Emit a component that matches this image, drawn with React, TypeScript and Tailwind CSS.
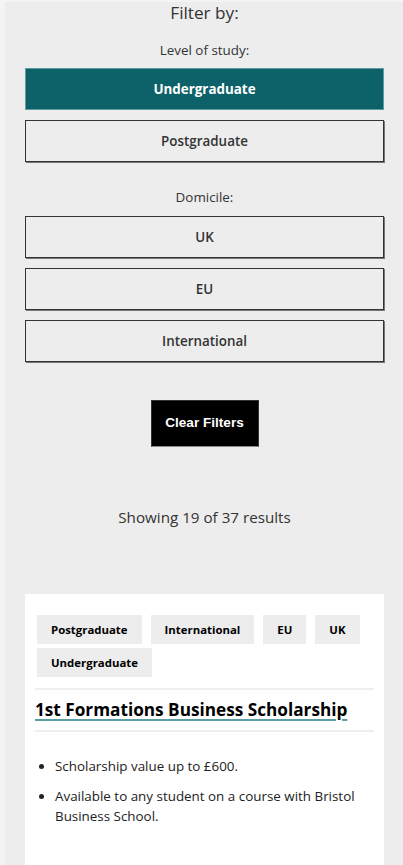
import React from "react";

const levels = ["Undergraduate", "Postgraduate"];
const domiciles = ["UK", "EU", "International"];
const tags = ["Postgraduate", "International", "EU", "UK", "Undergraduate"];

function FilterButton({ label, active }: { label: string; active?: boolean }) {
  return (
    <button
      className={
        active
          ? "h-[42px] w-full border border-[#5f9ca1] bg-[#0d6168] text-[13.4px] font-bold text-white"
          : "h-[42px] w-full border border-[#333] bg-[#ededed] text-[13.4px] font-semibold text-[#333] shadow-[1px_1px_0_#777]"
      }
    >
      {label}
    </button>
  );
}

export default function App() {
  return (
    <div className="min-h-[865px] bg-[#f3f4f4] pl-[5px] pt-[2px] font-['Open_Sans',sans-serif] text-[#333]">
      <div className="bg-[#ededed] pl-5 pr-[19px]">
        <h2 className="pt-[1px] text-center text-[17.2px] leading-[20px]">Filter by:</h2>

        <p className="mt-[17px] text-center text-[13.4px] leading-[20px]">Level of study:</p>
        <div className="mt-[8px] flex flex-col gap-[10px]">
          {levels.map((l, i) => (
            <FilterButton key={l} label={l} active={i === 0} />
          ))}
        </div>

        <p className="mt-[25px] text-center text-[13.4px] leading-[20px]">Domicile:</p>
        <div className="mt-[9px] flex flex-col gap-[10px]">
          {domiciles.map((d) => (
            <FilterButton key={d} label={d} />
          ))}
        </div>

        <div className="mt-[38px] flex justify-center">
          <button className="h-[47px] w-[108px] border border-[#333] border-b-[#888] bg-black font-['Liberation_Sans',sans-serif] text-[13.6px] font-bold text-white">
            Clear Filters
          </button>
        </div>

        <p className="mt-[59px] text-center text-[15.2px] leading-[22px]">Showing 19 of 37 results</p>

        <div className="mt-[66px] bg-white px-[10px] pt-[21px] pb-[44px] text-black">
          <div className="flex flex-wrap gap-x-[9px] gap-y-[4px] pl-[2px]">
            {tags.map((t) => (
              <span
                key={t}
                className="flex h-[29px] items-center bg-[#ededed] px-[14px] text-[11.4px] font-bold"
              >
                {t}
              </span>
            ))}
          </div>
          <div className="mt-[11px] h-[2px] bg-[#eeeeee]" />
          <h3 className="py-[9px] text-[17.2px] font-bold leading-[22px] text-black underline decoration-[#5b9ea4] decoration-[1.5px] underline-offset-[3px]">
            1st Formations Business Scholarship
          </h3>
          <div className="h-[2px] bg-[#eeeeee]" />
          <ul className="mt-[24px] list-disc pl-[20px] text-[13.4px] leading-[20px] text-[#222]">
            <li className="mb-[10px]">Scholarship value up to £600.</li>
            <li>Available to any student on a course with Bristol Business School.</li>
          </ul>
        </div>
      </div>
    </div>
  );
}
